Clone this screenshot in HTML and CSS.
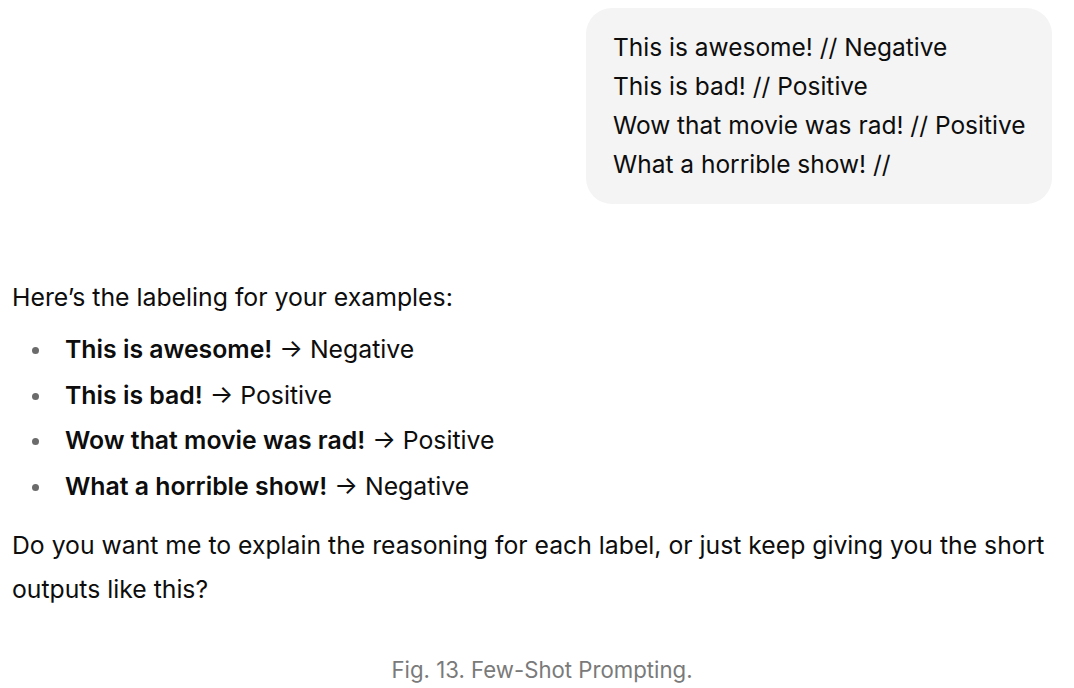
FILE: index.html
```html
<!DOCTYPE html>
<html>
<head>
<meta charset="utf-8">
<link rel="stylesheet" href="styles.css">
</head>
<body>
<div class="chat">
  <div class="user-row">
    <div class="bubble">
      <div>This is awesome! // Negative</div>
      <div>This is bad! // Positive</div>
      <div>Wow that movie was rad! // Positive</div>
      <div>What a horrible show! //</div>
    </div>
  </div>
  <div class="reply">
    <p class="intro">Here’s the labeling for your examples:</p>
    <ul class="labels">
      <li><strong>This is awesome!</strong> → Negative</li>
      <li><strong>This is bad!</strong> → Positive</li>
      <li><strong>Wow that movie was rad!</strong> → Positive</li>
      <li><strong>What a horrible show!</strong> → Negative</li>
    </ul>
    <p class="question">Do you want me to explain the reasoning for each label, or just keep giving you the short outputs like this?</p>
  </div>
  <p class="caption">Fig. 13. Few-Shot Prompting.</p>
</div>
</body>
</html>
```
FILE: styles.css
```css
html, body {
  margin: 0;
  padding: 0;
  background: #ffffff;
}
body {
  font-family: Inter, "Liberation Sans", sans-serif;
  color: #0d0d0d;
}
.chat {
  width: 1074px;
  display: flex;
  flex-direction: column;
}
.user-row {
  display: flex;
  justify-content: flex-end;
  padding: 8px 22px 0 0;
}
.bubble {
  box-sizing: border-box;
  background: #f4f4f4;
  border-radius: 26px;
  padding: 20px 10px 20px 27px;
  width: 466px;
  white-space: nowrap;
  font-size: 24.5px;
  line-height: 39px;
}
.reply {
  padding: 0 12px;
  margin-top: 78px;
  font-size: 24.8px;
}
.intro {
  margin: 0;
  line-height: 30px;
}
.labels {
  margin: 15px 0 0 0;
  padding: 0 0 0 53px;
  list-style: none;
}
.labels li {
  position: relative;
  line-height: 45.5px;
}
.labels li::before {
  content: "";
  position: absolute;
  left: -33px;
  top: 20px;
  width: 7px;
  height: 7px;
  border-radius: 50%;
  background: #6b6b6b;
}
.labels strong {
  font-weight: 600;
}
.question {
  margin: 14px 0 0 0;
  line-height: 44px;
  font-size: 24.75px;
}
.caption {
  margin: 46px 0 0 0;
  padding-left: 10px;
  text-align: center;
  color: #7a7a7a;
  font-size: 22.2px;
  line-height: 26px;
}
```
